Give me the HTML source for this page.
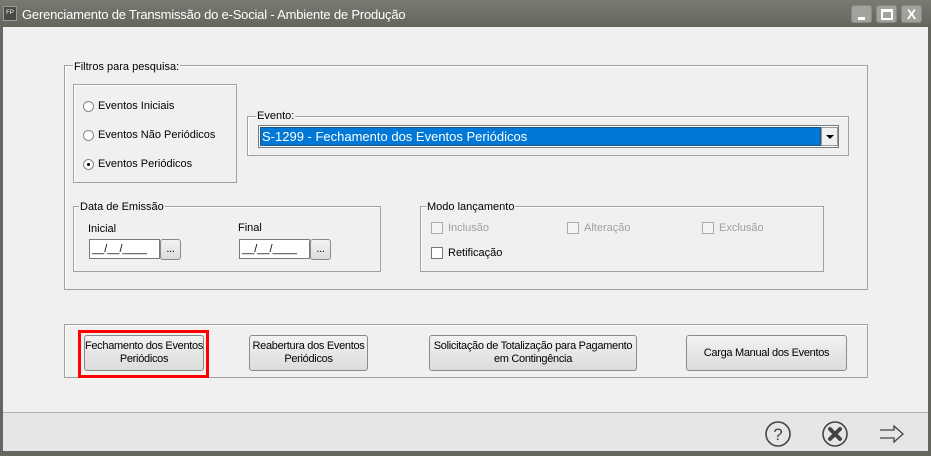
<!DOCTYPE html>
<html><head><meta charset="utf-8"><style>
*{margin:0;padding:0;box-sizing:border-box}
body{width:931px;height:456px;overflow:hidden;background:#f0f0f0;font-family:"Liberation Sans",sans-serif;font-size:11px;color:#000;position:relative}
.a{position:absolute;white-space:nowrap}
.g{position:absolute;border:1px solid #a0a0a0;box-shadow:1px 1px 0 #fff inset}
.lbl{position:absolute;background:#f0f0f0;padding:0 1px;font-size:11px;line-height:12px;white-space:nowrap}
.btn{position:absolute;border:1px solid #8a8a8a;border-radius:3px;background:linear-gradient(#f2f2f2,#dcdcdc);font-size:11px;text-align:center;display:flex;align-items:center;justify-content:center;line-height:13px;white-space:nowrap;letter-spacing:-0.3px}
.rad{position:absolute;width:11px;height:11px;border-radius:50%;border:1px solid #888;background:#fff}
.chk{position:absolute;width:12px;height:12px;border:1px solid #777;background:#fff}
.dis{color:#a0a0a0}
.inp{position:absolute;height:20px;background:#fff;border:1px solid #7a7a7a;font-size:11px;line-height:18px;padding-left:2px}
.tb{position:absolute;top:5px;width:21px;height:18px;background:#a2a29c;border:1px solid #8a8a84;border-radius:3px}
</style></head><body>
<div class="a" style="left:0;top:0;width:931px;height:27px;background:linear-gradient(#7a7a72,#65655d)"></div>
<div class="a" style="left:3px;top:6px;width:14px;height:15px;background:#4a4a44;border:1px solid #999;color:#fff;font-size:6px;line-height:13px;text-align:center">FP</div>
<div class="a" style="left:22px;top:7px;color:#fff;font-size:13px;letter-spacing:-0.2px">Gerenciamento de Transmissão do e-Social - Ambiente de Produção</div>
<div class="tb" style="left:851px"><div class="a" style="left:6px;top:11px;width:7px;height:3px;background:#fff"></div></div>
<div class="tb" style="left:876px"><div class="a" style="left:4px;top:3px;width:12px;height:11px;border:2px solid #fff;border-top-width:3px"></div></div>
<div class="tb" style="left:901px;color:#fff;font-weight:bold;text-align:center;font-size:14px;line-height:17px">X</div>
<div class="a" style="left:0;top:27px;width:3px;height:429px;background:#66665e"></div>
<div class="a" style="left:928px;top:27px;width:3px;height:429px;background:#66665e"></div>
<div class="a" style="left:0;top:451px;width:931px;height:5px;background:#66665e"></div>
<div class="a" style="left:3px;top:412px;width:925px;height:39px;background:#e6e6e6;border-top:1px solid #b0b0b0"></div>

<div class="g" style="left:64px;top:65px;width:804px;height:225px"></div>
<div class="lbl" style="left:73px;top:61px">Filtros para pesquisa:</div>
<div class="g" style="left:73px;top:84px;width:164px;height:99px"></div>
<div class="rad" style="left:83px;top:101px"></div><div class="a" style="left:98px;top:100px">Eventos Iniciais</div>
<div class="rad" style="left:83px;top:130px"></div><div class="a" style="left:98px;top:129px">Eventos Não Periódicos</div>
<div class="rad" style="left:83px;top:159px"><div class="a" style="left:3px;top:3px;width:3px;height:3px;border-radius:50%;background:#000"></div></div><div class="a" style="left:98px;top:158px">Eventos Periódicos</div>

<div class="g" style="left:247px;top:116px;width:602px;height:40px"></div>
<div class="lbl" style="left:256px;top:110px">Evento:</div>
<div class="a" style="left:258px;top:125px;width:581px;height:23px;border:1px solid #7a7a7a;background:#fff"></div>
<div class="a" style="left:260px;top:127px;width:561px;height:19px;background:#0078d7;border:1px dotted #333;color:#fff;font-size:13px;line-height:17px;padding-left:1px">S-1299 - Fechamento dos Eventos Periódicos</div>
<div class="a" style="left:821px;top:127px;width:17px;height:19px;background:#f0f0f0;border:1px solid #999"><div class="a" style="left:4px;top:7px;border-left:4px solid transparent;border-right:4px solid transparent;border-top:4px solid #000"></div></div>

<div class="g" style="left:73px;top:206px;width:308px;height:66px"></div>
<div class="lbl" style="left:79px;top:201px">Data de Emissão</div>
<div class="a" style="left:88px;top:223px">Inicial</div>
<div class="inp" style="left:89px;top:239px;width:71px">__/__/____</div>
<div class="btn" style="left:160px;top:239px;width:21px;height:21px">...</div>
<div class="a" style="left:238px;top:222px">Final</div>
<div class="inp" style="left:239px;top:239px;width:71px">__/__/____</div>
<div class="btn" style="left:310px;top:239px;width:21px;height:21px">...</div>

<div class="g" style="left:420px;top:206px;width:404px;height:66px"></div>
<div class="lbl" style="left:426px;top:201px">Modo lançamento</div>
<div class="chk" style="left:431px;top:222px;background:#f4f4f4;border-color:#aaa"></div><div class="a dis" style="left:448px;top:222px">Inclusão</div>
<div class="chk" style="left:567px;top:222px;background:#f4f4f4;border-color:#aaa"></div><div class="a dis" style="left:584px;top:222px">Alteração</div>
<div class="chk" style="left:702px;top:222px;background:#f4f4f4;border-color:#aaa"></div><div class="a dis" style="left:719px;top:222px">Exclusão</div>
<div class="chk" style="left:431px;top:247px"></div><div class="a" style="left:448px;top:247px">Retificação</div>

<div class="g" style="left:64px;top:324px;width:804px;height:54px"></div>
<div class="a" style="left:78px;top:330px;width:131px;height:48px;border:3px solid #f00"></div>
<div class="btn" style="left:84px;top:335px;width:120px;height:36px">Fechamento dos Eventos<br>Periódicos</div>
<div class="btn" style="left:249px;top:335px;width:119px;height:36px">Reabertura dos Eventos<br>Periódicos</div>
<div class="btn" style="left:429px;top:335px;width:208px;height:36px">Solicitação de Totalização para Pagamento<br>em Contingência</div>
<div class="btn" style="left:686px;top:335px;width:161px;height:36px">Carga Manual dos Eventos</div>

<svg class="a" style="left:760px;top:418px" width="160" height="32">
<circle cx="18" cy="16" r="12" fill="none" stroke="#444" stroke-width="1.6"/>
<text x="18" y="22" font-family="Liberation Sans" font-size="17" text-anchor="middle" fill="#444">?</text>
<circle cx="75" cy="16" r="12" fill="none" stroke="#444" stroke-width="1.6"/>
<path d="M70 11 L80 21 M80 11 L70 21" stroke="#444" stroke-width="4" stroke-linecap="round"/>
<path d="M120 12 H134 V8 L143 16 L134 24 V20 H120" fill="none" stroke="#444" stroke-width="1.3"/>
</svg>
</body></html>
